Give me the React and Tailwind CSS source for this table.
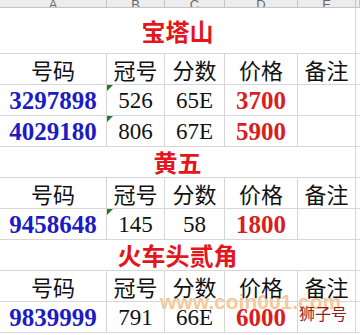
import React from "react";

const CJK = "font-['Noto_Sans_CJK_SC',sans-serif]";
const SERIF = "font-['Liberation_Serif','Noto_Sans_CJK_SC',serif]";
const GRID = "grid grid-cols-[107px_58px_60px_73px_58px_1fr]";
const CELL = "border-r border-b border-[#d6d6d6] flex items-center justify-center overflow-hidden relative";

function ColHeaders() {
  const letters = ["A", "B", "C", "D", "E", ""];
  return (
    <div className={GRID + " h-[8px] bg-[#ececec]"}>
      {letters.map((l, i) => (
        <div
          key={i}
          className="border-r border-b border-[#c4c4c4] h-[8px] overflow-hidden flex justify-center items-end"
        >
          <span className="text-[13px] leading-[13px] text-[#6a6a6a] font-['Liberation_Sans',sans-serif] translate-y-[4px]">
            {l}
          </span>
        </div>
      ))}
    </div>
  );
}

function TitleRow({ text, h }) {
  return (
    <div className={GRID}>
      <div className={CELL + " col-span-5 " + h}>
        <span className={CJK + " text-[24px] font-bold text-[#e3161c] leading-none"}>{text}</span>
      </div>
      <div className={"border-b border-[#d6d6d6] " + h}></div>
    </div>
  );
}

function HeaderRow() {
  const labels = ["号码", "冠号", "分数", "价格", "备注"];
  return (
    <div className={GRID}>
      {labels.map((l) => (
        <div key={l} className={CELL + " h-[31px]"}>
          <span className={CJK + " text-[22px] text-[#111] leading-none"}>{l}</span>
        </div>
      ))}
      <div className="border-b border-[#d6d6d6] h-[31px]"></div>
    </div>
  );
}

function Tri() {
  return (
    <div className="absolute top-0 left-0 w-0 h-0 border-t-[6px] border-t-[#1f7a2a] border-r-[6px] border-r-transparent"></div>
  );
}

function DataRow({ num, gh, score, price, note, tri }) {
  return (
    <div className={GRID}>
      <div className={CELL + " h-[31px]"}>
        <span className={SERIF + " text-[25px] font-bold text-[#1c1cc4] leading-none"}>{num}</span>
      </div>
      <div className={CELL + " h-[31px]"}>
        {tri && <Tri />}
        <span className={SERIF + " text-[23px] text-[#111] leading-none"}>{gh}</span>
      </div>
      <div className={CELL + " h-[31px]"}>
        <span className={SERIF + " text-[23px] text-[#111] leading-none"}>{score}</span>
      </div>
      <div className={CELL + " h-[31px]"}>
        <span className={SERIF + " text-[25px] font-bold text-[#d81e1e] leading-none"}>{price}</span>
      </div>
      <div className={CELL + " h-[31px] !justify-start"}>
        {note && (
          <span className={CJK + " text-[16px] text-[#8a1f1f] leading-none pl-[1px] -translate-y-[4px]"}>{note}</span>
        )}
      </div>
      <div className="border-b border-[#d6d6d6] h-[31px]"></div>
    </div>
  );
}

export default function App() {
  return (
    <div className="relative w-[360px] h-[335px] overflow-hidden bg-white">
      <div className="absolute left-[160px] top-[291px] text-[21px] font-bold text-[#f59a3a] opacity-55 font-['Liberation_Sans',sans-serif] leading-none pointer-events-none">
        www.coin001.com
      </div>
      <ColHeaders />
      <TitleRow text="宝塔山" h="h-[46px]" />
      <HeaderRow />
      <DataRow num="3297898" gh="526" score="65E" price="3700" tri />
      <DataRow num="4029180" gh="806" score="67E" price="5900" tri />
      <TitleRow text="黄五" h="h-[31px]" />
      <HeaderRow />
      <DataRow num="9458648" gh="145" score="58" price="1800" tri />
      <TitleRow text="火车头贰角" h="h-[31px]" />
      <HeaderRow />
      <DataRow num="9839999" gh="791" score="66E" price="6000" note="狮子号" />
    </div>
  );
}
